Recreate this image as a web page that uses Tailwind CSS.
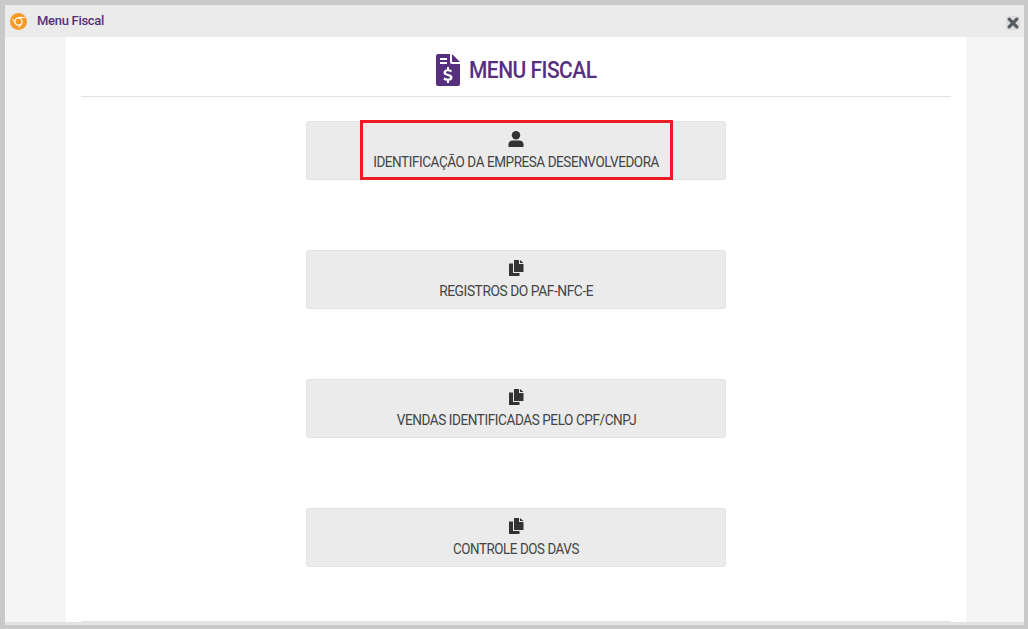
<!DOCTYPE html>
<html lang="pt-BR">
<head>
    <meta charset="UTF-8">
    <title>Menu Fiscal</title>
    <script src="https://cdn.jsdelivr.net/npm/@tailwindcss/browser@4"></script>
</head>
<body class="bg-[#c9c9c9] overflow-hidden font-['Roboto',sans-serif]">
    <div class="w-[1028px] h-[629px] pt-[5px] pl-[5px] pr-[4px] pb-[4px] flex flex-col">
        <!-- barra de titulo -->
        <div class="h-[32px] shrink-0 bg-[#ebebeb] flex items-center justify-between pl-[5px] pr-[4px]">
            <div class="flex items-center gap-[10px]">
                <svg class="w-[17px] h-[17px]" viewBox="0 0 17 17">
                    <circle cx="8.5" cy="8.5" r="8.5" fill="#f59a23"/>
                    <circle cx="8.5" cy="8.5" r="3.6" fill="none" stroke="#fff" stroke-width="1.2"/>
                    <path d="M8.5 4.4H15M5 10.5L2.8 6M12 10L8.5 15" stroke="#fff" stroke-width="1" fill="none"/>
                </svg>
                <span class="text-[13px] font-medium text-[#56307f] tracking-[-0.3px]">Menu Fiscal</span>
            </div>
            <svg class="w-[14px] h-[14px] mt-[3px]" viewBox="0 0 14 14">
                <rect width="14" height="14" rx="2" fill="#dcdcdc"/>
                <path d="M3.2 3.2L10.8 10.8M10.8 3.2L3.2 10.8" stroke="#555c60" stroke-width="3.2" stroke-linecap="round"/>
            </svg>
        </div>
        <!-- conteudo -->
        <div class="flex-1 bg-[#f5f5f5] border-b-[3px] border-[#e3e3e3] px-[61px] min-h-0">
            <div class="w-[900px] h-full bg-white px-[15px] flex flex-col">
                <div class="h-[60px] shrink-0 border-b border-[#e2e2e2] flex items-center justify-center gap-[9px] pt-[7px]">
                    <svg class="w-[24px] h-[32px]" viewBox="0 0 24 32">
                        <path fill="#56307f" fill-rule="evenodd" d="M2 0H14V8a2 2 0 0 0 2 2H24V30a2 2 0 0 1-2 2H2a2 2 0 0 1-2-2V2a2 2 0 0 1 2-2ZM16 0L24 8H16ZM4 4V6H11V4ZM4 8V10H11V8ZM11 13V15.2C8.6 15.6 7.5 17 7.5 18.6C7.5 20.6 9 21.3 11.6 22C13.6 22.5 14 23 14 23.6C14 24.4 13 24.8 12 24.8C10.6 24.8 9.6 24.4 8.4 23.6L7.2 25.4C8.4 26.2 9.6 26.6 11 26.8V29H13V26.8C15.2 26.4 16.5 25.1 16.5 23.4C16.5 21.4 15 20.6 12.4 19.9C10.6 19.4 10 19 10 18.4C10 17.6 10.9 17.3 12 17.3C13 17.3 14 17.6 15 18.2L16.1 16.4C15.2 15.8 14.2 15.4 13 15.2V13Z"/>
                </svg>
                    <h1 class="w-[127px] whitespace-nowrap origin-left scale-x-[0.875] text-[24px] font-medium text-[#56307f] tracking-[-0.6px]">MENU FISCAL</h1>
                </div>
                <div class="w-[420px] mx-auto mt-[24px] flex flex-col gap-[70px]">
                    <!-- botao 1 -->
                    <div class="relative h-[59px] bg-[#ebebeb] border border-[#e2e2e2] rounded-[3px] flex flex-col items-center pt-[9px] text-[#333]">
                        <svg class="w-[16px] h-[16px]" viewBox="0 0 16 16" fill="#333">
                            <circle cx="8" cy="4.2" r="4.2"/>
                            <path d="M0.5 16V13.2C0.5 10.8 2.4 9.4 4.6 9.4H11.4C13.6 9.4 15.5 10.8 15.5 13.2V16Z"/>
                        </svg>
                        <span class="mt-[5px] whitespace-nowrap scale-x-[0.965] text-[14px] leading-[20px] tracking-[-0.45px] text-[#444]">IDENTIFICAÇÃO DA EMPRESA DESENVOLVEDORA</span>
                        <div class="absolute left-[53px] top-[-2px] w-[313px] h-[60px] border-[3px] border-[#ed1c24]"></div>
                    </div>
                    <!-- botao 2 -->
                    <div class="h-[59px] bg-[#ebebeb] border border-[#e2e2e2] rounded-[3px] flex flex-col items-center pt-[9px] text-[#333]">
                        <svg class="w-[15px] h-[16px]" viewBox="0 0 15 16" fill="#333">
                            <path d="M5 0H10V4H14.5V12H5Z"/><path d="M11 0L14.5 3H11Z"/>
                            <path d="M0 3.5H4V13H10.5V16H0Z"/>
                        </svg>
                        <span class="mt-[5px] whitespace-nowrap scale-x-[0.985] text-[14px] leading-[20px] tracking-[-0.45px] text-[#444]">REGISTROS DO PAF-NFC-E</span>
                    </div>
                    <!-- botao 3 -->
                    <div class="h-[59px] bg-[#ebebeb] border border-[#e2e2e2] rounded-[3px] flex flex-col items-center pt-[9px] text-[#333]">
                        <svg class="w-[15px] h-[16px]" viewBox="0 0 15 16" fill="#333">
                            <path d="M5 0H10V4H14.5V12H5Z"/><path d="M11 0L14.5 3H11Z"/>
                            <path d="M0 3.5H4V13H10.5V16H0Z"/>
                        </svg>
                        <span class="mt-[5px] whitespace-nowrap scale-x-[0.97] text-[14px] leading-[20px] tracking-[-0.45px] text-[#444]">VENDAS IDENTIFICADAS PELO CPF/CNPJ</span>
                    </div>
                    <!-- botao 4 -->
                    <div class="h-[59px] bg-[#ebebeb] border border-[#e2e2e2] rounded-[3px] flex flex-col items-center pt-[9px] text-[#333]">
                        <svg class="w-[15px] h-[16px]" viewBox="0 0 15 16" fill="#333">
                            <path d="M5 0H10V4H14.5V12H5Z"/><path d="M11 0L14.5 3H11Z"/>
                            <path d="M0 3.5H4V13H10.5V16H0Z"/>
                        </svg>
                        <span class="mt-[5px] whitespace-nowrap scale-x-[0.955] text-[14px] leading-[20px] tracking-[-0.45px] text-[#444]">CONTROLE DOS DAVS</span>
                    </div>
                </div>
                <div class="mt-auto border-t border-[#e2e2e2]"></div>
            </div>
        </div>
    </div>
</body>
</html>
